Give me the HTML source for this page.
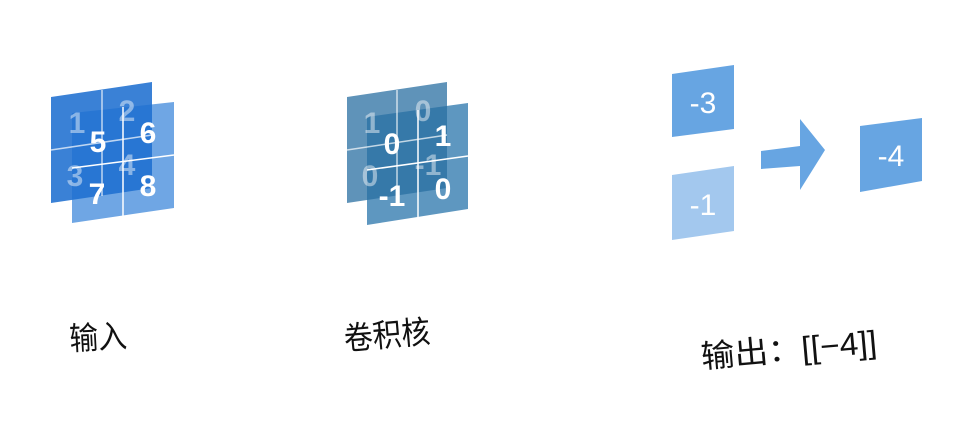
<!DOCTYPE html>
<html><head><meta charset="utf-8"><style>
html,body{margin:0;padding:0;background:#fff;width:980px;height:425px;overflow:hidden}
svg{display:block}
.n{font-family:"Liberation Sans",sans-serif;font-weight:bold;fill:#fff;font-size:30px;text-anchor:middle}
.l{font-family:"Liberation Sans","WenQuanYi Zen Hei",sans-serif;fill:#111;font-size:32px}
</style></head><body>
<svg width="980" height="425" viewBox="0 0 980 425">
<polygon points="72,113 174,102 174,208 72,223" fill="#6fa6e4"/>
<polygon points="51,97 152,82 152,188 51,203" fill="#1f6fd0" opacity="0.88"/>
<g stroke="#fff" stroke-width="1.5" opacity="0.7">
<line x1="51" y1="150" x2="152" y2="135"/><line x1="102" y1="90" x2="102" y2="196"/></g>
<g class="n" opacity="0.45"><text x="77" y="133">1</text><text x="127" y="121">2</text><text x="75" y="186">3</text><text x="127" y="175">4</text></g>
<g stroke="#fff" stroke-width="1.5"><line x1="72" y1="168" x2="174" y2="155"/><line x1="123" y1="107" x2="123" y2="216"/></g>
<g class="n"><text x="98" y="152">5</text><text x="148" y="143">6</text><text x="97" y="204">7</text><text x="148" y="196">8</text></g>
<polygon points="367,117 468,103 468,209 367,225" fill="#5e97c0"/>
<polygon points="347,97 447,82 447,188 347,203" fill="#2a6fa2" opacity="0.75"/>
<g stroke="#fff" stroke-width="1.5" opacity="0.7"><line x1="347" y1="150" x2="447" y2="135"/><line x1="397" y1="90" x2="397" y2="196"/></g>
<g class="n" opacity="0.45"><text x="372" y="133">1</text><text x="423" y="121">0</text><text x="370" y="186">0</text><text x="428" y="175">-1</text></g>
<g stroke="#fff" stroke-width="1.5"><line x1="367" y1="170" x2="468" y2="156"/><line x1="418" y1="110" x2="418" y2="218"/></g>
<g class="n"><text x="392" y="154">0</text><text x="443" y="146">1</text><text x="392" y="206">-1</text><text x="443" y="199">0</text></g>
<polygon points="672,74 734,65 734,129 672,137" fill="#67a5e2"/>
<polygon points="672,175 734,166 734,231 672,240" fill="#a3c8ee"/>
<polygon points="860,126 922,118 922,181 860,192" fill="#67a5e2"/>
<polygon points="761,151 800,146 800,119 825,150 800,190 800,166 761,169" fill="#67a5e2"/>
<g class="n" style="font-weight:normal;font-size:30px"><text x="703" y="113">-3</text><text x="703" y="215">-1</text><text x="891" y="166">-4</text></g>
<text class="l" transform="translate(70 350) rotate(-3) scale(0.9 1)">输入</text>
<text class="l" transform="translate(345 350) rotate(-5) scale(0.9 1)">卷积核</text>
<text class="l" transform="translate(702 368) rotate(-5) scale(1.05 1)">输出：[[−4]]</text>
</svg>
</body></html>
